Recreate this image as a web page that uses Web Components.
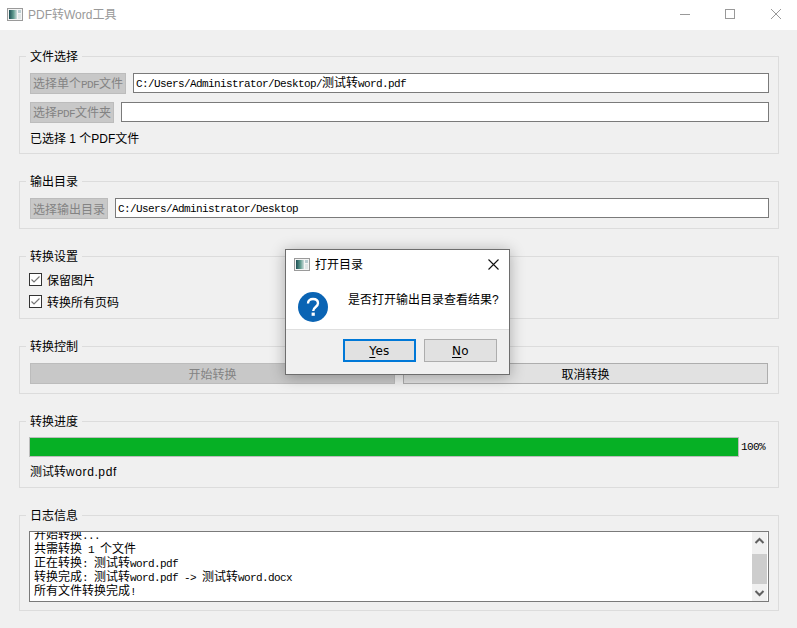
<!DOCTYPE html>
<html lang="zh"><head><meta charset="utf-8"><title>PDF转Word工具</title>
<style>
html,body{margin:0;padding:0;width:797px;height:628px;overflow:hidden;background:#f0f0f0}
body{font:12px/16px "Liberation Sans","Noto Sans CJK SC",sans-serif;color:#000}
</style></head><body>
<pdf-app></pdf-app>
<script>
const appIcon=`<svg width="16" height="14" viewBox="0 0 16 14"><defs><linearGradient id="g" x1="0" y1="0" x2="1" y2="0"><stop offset="0" stop-color="#1d4f55"/><stop offset=".55" stop-color="#5f9a8e"/><stop offset="1" stop-color="#cfdedd"/></linearGradient></defs><rect x=".5" y=".5" width="15" height="12" fill="#f4f4f4" stroke="#9a9a9a"/><rect x="2" y="2" width="8" height="9" fill="url(#g)"/><rect x="11" y="2" width="3" height="3" fill="#b9ccd0"/><rect x="11" y="6" width="3" height="5" fill="#dfe6e6"/></svg>`;
function def(name,css,html){
  customElements.define(name,class extends HTMLElement{
    constructor(){super();const s=this.attachShadow({mode:'open'});s.innerHTML=`<style>${css}</style>${html}`;}
  });
}
/* ASCII runs take a mono face at a 6px advance; CJK runs stay 12px wide */
const mx=s=>s.replace(/[\x20-\x7e]+/g,m=>`<span class="m">${m.replace(/>/g,'&gt;')}</span>`);
const CJKF='"Noto Sans CJK SC",sans-serif';
def('title-bar',`:host{display:flex;align-items:center;height:30px;background:#fff;color:#999;box-sizing:border-box;padding-left:7px}
.t{margin-left:5px;font-size:12px;line-height:16px}
.c{margin-left:auto;display:flex}
svg{display:block}`,
`${appIcon}<span class="t"><slot></slot></span><div class="c"><svg width="126" height="30" viewBox="0 0 126 30" fill="none" stroke="#999"><path d="M9 14.5H19"/><rect x="54.5" y="9.5" width="9" height="9"/><path d="M100 9L110 19M110 9L100 19"/></svg></div>`);
def('group-box',`:host{display:block;box-sizing:border-box;border:1px solid #dcdcdc;padding:0 9px 0 10px;margin-top:27px}
.t{display:block;width:max-content;height:16px;margin:-8px 0 0 -4px;padding:0 4px;background:#f0f0f0;font-size:12px;line-height:16px}`,
`<span class="t"><slot name="title"></slot></span><slot></slot>`);
def('q-row',`:host{display:flex;gap:7px;align-items:flex-start}`,`<slot></slot>`);
def('q-button',`:host{display:inline-flex;align-items:center;justify-content:center;box-sizing:border-box;height:21px;padding:2px 2px 0;background:#e1e1e1;border:1px solid #adadad;color:#000;font-size:12px;line-height:16px;white-space:nowrap;flex:none}
:host([disabled]){background:#c8c8c8;border-color:#bcbcbc;color:#838383}`,`<span><slot></slot></span>`);
def('q-input',`:host{display:block;box-sizing:border-box;flex:1;height:20px;background:#fff;border:1px solid #7a7a7a;padding-left:2px;font-size:12px;line-height:16px;white-space:pre;overflow:hidden}`,`<slot></slot>`);
def('q-check',`:host{display:flex;align-items:center;height:13px;margin-left:-1px;font-size:12px;line-height:16px}
svg{margin-right:5px;flex:none}
span{padding-top:2px}`,
`<svg width="13" height="13" viewBox="0 0 13 13"><rect x=".5" y=".5" width="12" height="12" fill="#fff" stroke="#333"/><path d="M2.5 6.5L5 9L10.5 3.5" fill="none" stroke="#777" stroke-width="1.2"/></svg><span><slot></slot></span>`);
def('q-progress',`:host{display:flex;align-items:center;height:20px;margin-left:-1px}
.b{box-sizing:border-box;width:710px;height:20px;background:#06b025;border:1px solid #bcbcbc}
.p{margin-left:2px;font:11px/14px "Liberation Mono",monospace;letter-spacing:-.6px}`,`<div class="b"></div><span class="p"><slot></slot></span>`);
def('log-box',`:host{display:flex;box-sizing:border-box;height:71px;width:740px;margin-left:-1px;background:#fff;border:1px solid #7a7a7a;overflow:hidden}
.txt{flex:1;overflow:hidden;padding-left:4px}
.in{margin-top:-5px;font-size:12px;line-height:14px;white-space:pre}
.sb{width:15px;margin-right:1px;background:#f0f0f0;display:flex;flex-direction:column;flex:none}
.a{height:22px;flex:none}.th{height:30px;background:#cdcdcd;flex:none}.sp{flex:1}
svg{display:block}`,
`<div class="txt"><div class="in"><slot></slot></div></div><div class="sb"><svg class="a" width="15" height="22" viewBox="0 0 15 22"><path d="M3.5 11L7.5 7L11.5 11" fill="none" stroke="#606060" stroke-width="2"/></svg><div class="th"></div><div class="sp"></div><svg width="15" height="17" viewBox="0 0 15 17"><path d="M3.5 7L7.5 11L11.5 7" fill="none" stroke="#606060" stroke-width="2"/></svg></div>`);
def('msg-dialog',`:host{position:absolute;left:285px;top:249px;width:225px;height:126px;box-sizing:border-box;border:1px solid #6e6e6e;background:#fff;box-shadow:0 2px 14px rgba(0,0,0,.3);display:flex;flex-direction:column;font-size:12px;color:#000}
.h{display:flex;align-items:center;height:29px;padding-left:8px;flex:none}
.h span{margin-left:5px}
.h svg:last-child{margin-left:auto;margin-right:10px}
.b{display:flex;height:50px;flex:none;padding-left:12px;box-sizing:border-box}
.b svg{margin-top:13px;flex:none}
.msg{margin:13px 0 0 20px;white-space:nowrap}
.f{flex:1;background:#f0f0f0;border-top:1px solid #dfdfdf;display:flex;justify-content:flex-end;gap:8px;padding:9px 12px 0 0}
.btn{box-sizing:border-box;width:73px;height:23px;background:#e1e1e1;border:1px solid #adadad;display:flex;align-items:center;justify-content:center;letter-spacing:.3px;font:12px "DejaVu Sans",sans-serif}
.btn.d{border:2px solid #0078d7}
u{text-underline-offset:2px}`,
`<div class="h">${appIcon}<span><slot name="title"></slot></span><svg width="11" height="11" viewBox="0 0 11 11"><path d="M.5.5L10.5 10.5M10.5.5L.5 10.5" stroke="#111" stroke-width="1.1" fill="none"/></svg></div>
<div class="b"><svg width="30" height="30" viewBox="0 0 30 30"><circle cx="15" cy="15" r="15" fill="#0a64b4"/><path d="M10 11.5C10 8.5 12.2 7 15 7C18 7 20 8.7 20 11.3C20 15 15.2 15 15.2 19" fill="none" stroke="#fff" stroke-width="2.4"/><rect x="13.6" y="20.6" width="3.2" height="3.2" fill="#fff"/></svg><div class="msg"><slot></slot></div></div>
<div class="f"><div class="btn d"><span><u>Y</u>es</span></div><div class="btn"><span><u>N</u>o</span></div></div>`);
const logLines=['开始转换...','共需转换 1 个文件','正在转换: 测试转word.pdf','转换完成: 测试转word.pdf -> 测试转word.docx','所有文件转换完成!'];
def('pdf-app',`:host{display:block;width:797px;height:628px;position:relative;overflow:hidden;background:#f0f0f0;font:12px/16px "Liberation Sans","Noto Sans CJK SC",sans-serif}
.w{padding:0 18px 0 19px;display:flow-root}
group-box:first-child{margin-top:26px}
.col{display:flex;flex-direction:column}
.zh{font-family:${CJKF}}
.m{font-family:"Liberation Mono",monospace;font-size:11px;letter-spacing:-.6px}
.s{letter-spacing:.6px}
.l{display:block;height:14px;line-height:14px;overflow:visible}
.btns{display:flex;gap:8px;margin-right:1px}
.btns q-button{flex:1}`,
`<title-bar>PDF转Word工具</title-bar>
<div class="w">
<group-box style="height:98px"><span slot="title">文件选择</span>
 <q-row style="margin-top:8px"><q-button disabled>${mx('选择单个PDF文件')}</q-button><q-input class="zh">${mx('C:/Users/Administrator/Desktop/测试转word.pdf')}</q-input></q-row>
 <q-row style="margin-top:8px"><q-button disabled>${mx('选择PDF文件夹')}</q-button><q-input></q-input></q-row>
 <div style="margin-top:8px">已选择 1 个PDF文件</div>
</group-box>
<group-box style="height:48px"><span slot="title">输出目录</span>
 <q-row style="margin-top:8px"><q-button disabled>选择输出目录</q-button><q-input class="zh">${mx('C:/Users/Administrator/Desktop')}</q-input></q-row>
</group-box>
<group-box style="height:63px"><span slot="title">转换设置</span>
 <div class="col" style="gap:9px;margin-top:8px"><q-check>保留图片</q-check><q-check>转换所有页码</q-check></div>
</group-box>
<group-box style="height:48px"><span slot="title">转换控制</span>
 <div class="btns" style="margin-top:8px"><q-button disabled>开始转换</q-button><q-button>取消转换</q-button></div>
</group-box>
<group-box style="height:67px"><span slot="title">转换进度</span>
 <q-progress style="margin-top:7px">100%</q-progress>
 <div style="margin-top:7px">测试转<span class="s">word.pdf</span></div>
</group-box>
<group-box style="height:96px"><span slot="title">日志信息</span>
 <log-box style="margin-top:7px"><div class="zh">${logLines.map(t=>`<span class="l">${mx(t)}</span>`).join('')}</div></log-box>
</group-box>
</div>
<msg-dialog><span slot="title">打开目录</span>是否打开输出目录查看结果?</msg-dialog>`);
</script>
</body></html>
